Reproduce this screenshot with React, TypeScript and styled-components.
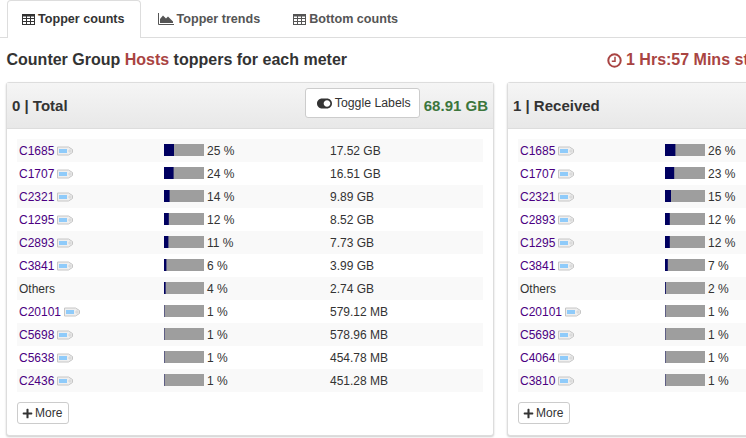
import React from "react";
import styled, { createGlobalStyle } from "styled-components";
import { FaToggleOn, FaPlus } from "react-icons/fa";

const Global = createGlobalStyle`
  html, body { margin: 0; padding: 0; background: #fff; overflow: hidden; }
  body { font-family: "Liberation Sans", Arial, sans-serif; font-size: 12px; color: #333; }
`;
const Page = styled.div`width: 746px; height: 438px; overflow: hidden;`;
const Tabs = styled.div`
  display: flex; height: 37px; border-bottom: 1px solid #ddd; padding-left: 7px; box-sizing: content-box;
`;
const Tab = styled.div<{ $active?: boolean }>`
  display: flex; align-items: center; gap: 3px; height: ${p => (p.$active ? 38 : 37)}px; box-sizing: border-box;
  padding: 0 15px 0 14px; margin-right: 2px; font-size: 12.6px; font-weight: bold; line-height: 1;
  color: ${p => (p.$active ? "#333" : "#555")};
  background: #fff;
  border: 1px solid ${p => (p.$active ? "#ddd" : "transparent")};
  border-bottom: none; border-radius: 4px 4px 0 0;
  svg { flex: none; }
`;
const TitleRow = styled.div`
  display: flex; height: 44px; align-items: center; padding: 0 0 0 6.5px; white-space: nowrap; font-weight: bold; font-size: 16px;
`;
const Title = styled.div`width: 600.5px; color: #333; flex: none;`;
const Hosts = styled.span`color: #a94442;`;
const Stale = styled.div`
  display: flex; align-items: center; gap: 4px; color: #a94442; flex: none;
`;
const Panels = styled.div`display: flex; gap: 13px; padding-left: 6px; width: 1100px;`;
const Panel = styled.div`
  width: 488px; height: 354px; flex: none; box-sizing: border-box; background: #fff;
  border: 1px solid #ddd; border-radius: 3px; box-shadow: 0 1px 2px rgba(0,0,0,.2);
`;
const Head = styled.div`
  display: flex; align-items: center; height: 46px; box-sizing: border-box; padding: 0 5px;
  background: linear-gradient(#f5f5f5, #e8e8e8); border-bottom: 1px solid #ddd;
`;
const HeadTitle = styled.div`font-size: 15px; font-weight: bold; color: #333; flex: 1;`;
const Toggle = styled.button`
  display: flex; align-items: center; gap: 3px; height: 30px; width: 115px; padding: 0 0 0 11px; margin: -5px 4px 0 0;
  box-sizing: border-box; background: #fff; border: 1px solid #ccc; border-radius: 3px; color: #333;
  font: 12.3px "Liberation Sans", Arial, sans-serif; white-space: nowrap;
  svg { width: 15px; height: 15px; flex: none; }
`;
const Total = styled.div`font-size: 15px; font-weight: bold; color: #3c763d;`;
const Body = styled.div`padding: 10px 10px 0;`;
const Row = styled.div<{ $alt: boolean }>`
  display: grid; grid-template-columns: 145px 166px 1fr; height: 23px; align-items: center;
  background: ${p => (p.$alt ? "#f9f9f9" : "#fff")}; padding-left: 2px; line-height: 1;
`;
const Name = styled.div`display: flex; align-items: center; gap: 3px;`;
const HostLink = styled.a`color: #4b0082;`;
const Plain = styled.span`color: #333;`;
const Pct = styled.div`display: flex; align-items: center; gap: 3px; white-space: nowrap;`;
const BarSvg = styled.svg`display: block; flex: none; margin-top: -1px;`;
const Value = styled.div`color: #333;`;
const More = styled.button`
  display: flex; align-items: center; gap: 2px; margin-top: 10px; width: 52px; height: 22px; padding: 0 0 0 4px; box-sizing: border-box;
  background: #fff; border: 1px solid #ccc; border-radius: 3px; color: #333;
  font: 12px "Liberation Sans", Arial, sans-serif;
  svg { width: 11px; height: 11px; flex: none; }
`;

const TableIcon = () => (
  <svg width="13" height="11" viewBox="0 0 13 11">
    <rect x="0.5" y="0.5" width="12" height="10" fill="none" stroke="currentColor" />
    <rect x="0.5" y="0.5" width="12" height="2" fill="currentColor" />
    <path d="M4.5 2V11M8.5 2V11M0 4.5H13M0 7.5H13" stroke="currentColor" strokeWidth="1" fill="none" />
  </svg>
);
const AreaIcon = () => (
  <svg width="16" height="12" viewBox="0 0 16 12">
    <path d="M0.5 0V11.5H16" fill="none" stroke="currentColor" />
    <path d="M2 10V6L5 2.5L8 5.5L10 3.5L15 8.5V10Z" fill="currentColor" />
  </svg>
);
const ClockIcon = () => (
  <svg width="15" height="15" viewBox="0 0 15 15">
    <circle cx="7.5" cy="7.5" r="6.2" fill="none" stroke="currentColor" strokeWidth="2" />
    <path d="M8 3.8V8.2H4.8" fill="none" stroke="currentColor" strokeWidth="1.5" />
  </svg>
);
const TagIcon = () => (
  <svg width="17" height="10" viewBox="0 0 17 10">
    <path d="M0.5 1H11.5L15.5 3.5V6.5L11.5 9H0.5Z" fill="#efefef" stroke="#c6c6c6" />
    <rect x="2" y="3" width="8" height="4" fill="#8fcbfa" />
    <circle cx="13" cy="5" r="1.1" fill="#fff" stroke="#c6c6c6" strokeWidth="0.8" />
  </svg>
);
const Bar = ({ pct }: { pct: number }) => (
  <BarSvg width="40" height="12" viewBox="0 0 40 12">
    <rect width="40" height="12" fill="#9e9e9e" />
    <rect width={pct * 0.4} height="12" fill="#000060" />
  </BarSvg>
);

type R = [string, number, string];
const left: R[] = [
  ["C1685", 25, "17.52 GB"], ["C1707", 24, "16.51 GB"], ["C2321", 14, "9.89 GB"], ["C1295", 12, "8.52 GB"],
  ["C2893", 11, "7.73 GB"], ["C3841", 6, "3.99 GB"], ["Others", 4, "2.74 GB"], ["C20101", 1, "579.12 MB"],
  ["C5698", 1, "578.96 MB"], ["C5638", 1, "454.78 MB"], ["C2436", 1, "451.28 MB"],
];
const right: R[] = [
  ["C1685", 26, "18.1 GB"], ["C1707", 23, "16.2 GB"], ["C2321", 15, "10.1 GB"], ["C2893", 12, "8.4 GB"],
  ["C1295", 12, "8.2 GB"], ["C3841", 7, "4.6 GB"], ["Others", 2, "1.4 GB"], ["C20101", 1, "560 MB"],
  ["C5698", 1, "540 MB"], ["C4064", 1, "440 MB"], ["C3810", 1, "420 MB"],
];

const Rows = ({ rows }: { rows: R[] }) => (
  <>
    {rows.map((r, i) => (
      <Row key={r[0]} $alt={i % 2 === 0}>
        <Name>
          {r[0] === "Others" ? <Plain>Others</Plain> : <><HostLink>{r[0]}</HostLink><TagIcon /></>}
        </Name>
        <Pct>
          <Bar pct={r[1]} />
          <span>{r[1]} %</span>
        </Pct>
        <Value>{r[2]}</Value>
      </Row>
    ))}
  </>
);

export default function App() {
  return (
    <Page>
      <Global />
      <Tabs>
        <Tab $active><TableIcon />Topper counts</Tab>
        <Tab><AreaIcon />Topper trends</Tab>
        <Tab><TableIcon />Bottom counts</Tab>
      </Tabs>
      <TitleRow>
        <Title>Counter Group <Hosts>Hosts</Hosts> toppers for each meter</Title>
        <Stale><ClockIcon />1 Hrs:57 Mins stale</Stale>
      </TitleRow>
      <Panels>
        <Panel>
          <Head>
            <HeadTitle>0 | Total</HeadTitle>
            <Toggle><FaToggleOn />Toggle Labels</Toggle>
            <Total>68.91 GB</Total>
          </Head>
          <Body><Rows rows={left} /><More><FaPlus />More</More></Body>
        </Panel>
        <Panel>
          <Head><HeadTitle>1 | Received</HeadTitle></Head>
          <Body><Rows rows={right} /><More><FaPlus />More</More></Body>
        </Panel>
      </Panels>
    </Page>
  );
}
